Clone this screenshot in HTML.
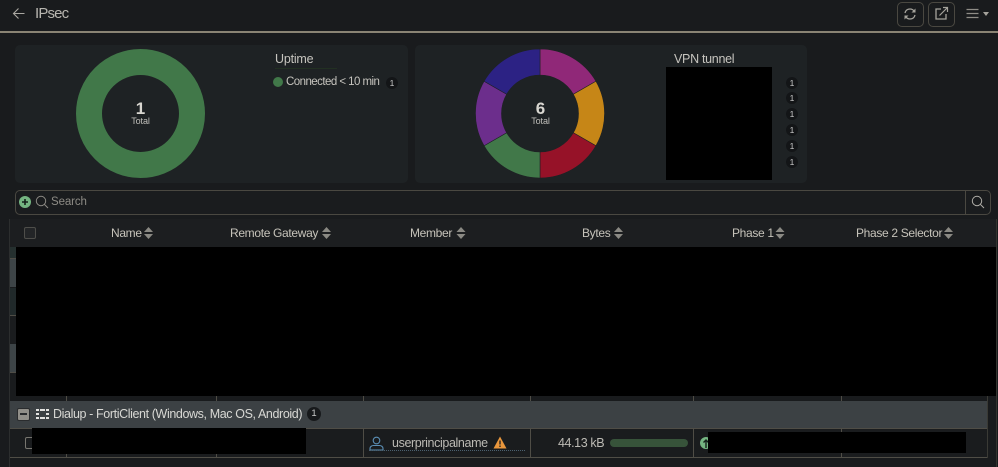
<!DOCTYPE html>
<html>
<head>
<meta charset="utf-8">
<style>
html,body{margin:0;padding:0;background:#191b1d;}
#p{position:relative;width:998px;height:467px;overflow:hidden;background:#191b1d;font-family:"Liberation Sans",sans-serif;color:#c9c7c1;}
#p div,#p span.a{position:absolute;}
.t{white-space:nowrap;line-height:1;}
.h{top:226px;font-size:12px;letter-spacing:-.33px;color:#c6c3ba;white-space:nowrap;line-height:14px;}
.b{width:12px;height:12px;border-radius:50%;background:#131517;color:#c8c8c8;font-size:8.5px;line-height:12px;text-align:center;}
.tick{width:1px;background:#4f4d46;}
</style>
</head>
<body>
<div id="p">
<!-- top bar -->
<svg style="position:absolute;left:12px;top:7px" width="14" height="13" viewBox="0 0 14 13"><path d="M12.5 6.500H1.500M6.500 1.500L1.500 6.500L6.500 11.500" fill="none" stroke="#a9a7a1" stroke-width="1.100"/></svg>
<div class="t" style="left:35px;top:6px;font-size:15px;letter-spacing:-.85px;color:#b8b6b0">IPsec</div>
<div style="left:0;top:31px;width:998px;height:2px;background:#8a8474"></div>

<div style="left:897px;top:2px;width:25px;height:23px;border:1px solid #4a4841;border-radius:5px"></div>
<svg style="position:absolute;left:903px;top:7px" width="14" height="14" viewBox="0 0 14 14"><path d="M2 6C2.500 3.500 4.500 2 7 2C9 2 10.500 3 11.500 4.500M12 8C11.500 10.500 9.500 12 7 12C5 12 3.500 11 2.500 9.500" fill="none" stroke="#a5a39c" stroke-width="1.300"/><path d="M12.500 1.500V5.500H8.500ZM1.500 12.500V8.500H5.500Z" fill="#a5a39c"/></svg>
<div style="left:928px;top:2px;width:25px;height:23px;border:1px solid #4a4841;border-radius:5px"></div>
<svg style="position:absolute;left:934px;top:6px" width="15" height="15" viewBox="0 0 15 15"><path d="M7 3H2V13H12V8" fill="none" stroke="#a5a39c" stroke-width="1.300"/><path d="M5.500 9.500L13 2M9 1.500H13.500V6" fill="none" stroke="#a5a39c" stroke-width="1.200"/></svg>
<svg style="position:absolute;left:966px;top:8px" width="24" height="12" viewBox="0 0 24 12"><path d="M0.500 1.500H12.500M0.500 5.500H12.500M0.500 9.500H12.500" stroke="#8f8d87" stroke-width="1.300"/><path d="M17 4H23L20 8Z" fill="#a5a39c"/></svg>

<!-- cards -->
<div style="left:15px;top:45px;width:393px;height:138px;border-radius:5px;background:#1e2224"></div>
<div style="left:415px;top:45px;width:392px;height:138px;border-radius:5px;background:#1e2224"></div>

<svg style="position:absolute;left:0;top:0" width="998" height="200" viewBox="0 0 998 200">
<circle cx="140.500" cy="113.500" r="51.500" fill="none" stroke="#417849" stroke-width="26"/>
<g stroke="#1e2224" stroke-width=".6">
<path d="M540 49A64.500 64.500 0 0 1 595.900 81.250L573.350 94.250A38.500 38.500 0 0 0 540 75Z" fill="#902878"/>
<path d="M595.900 81.250A64.500 64.500 0 0 1 595.900 145.750L573.350 132.750A38.500 38.500 0 0 0 573.350 94.250Z" fill="#c68617"/>
<path d="M595.900 145.750A64.500 64.500 0 0 1 540 178L540 152A38.500 38.500 0 0 0 573.350 132.750Z" fill="#961228"/>
<path d="M540 178A64.500 64.500 0 0 1 484.100 145.750L506.650 132.750A38.500 38.500 0 0 0 540 152Z" fill="#417849"/>
<path d="M484.100 145.750A64.500 64.500 0 0 1 484.100 81.250L506.650 94.250A38.500 38.500 0 0 0 506.650 132.750Z" fill="#6c2e8c"/>
<path d="M484.100 81.250A64.500 64.500 0 0 1 540 49L540 75A38.500 38.500 0 0 0 506.650 94.250Z" fill="#2c2284"/>
</g>
</svg>

<div class="t" style="left:100px;width:81px;text-align:center;top:100px;font-size:17px;font-weight:bold;color:#d8d6d0">1</div>
<div class="t" style="left:100px;width:81px;text-align:center;top:117px;font-size:9px;letter-spacing:-.1px;color:#c0bfba">Total</div>
<div class="t" style="left:500px;width:81px;text-align:center;top:100px;font-size:17px;font-weight:bold;color:#d8d6d0">6</div>
<div class="t" style="left:500px;width:81px;text-align:center;top:117px;font-size:9px;letter-spacing:-.1px;color:#c0bfba">Total</div>

<div class="t" style="left:275px;top:53px;font-size:12.500px;letter-spacing:-.2px;color:#c6c4be">Uptime</div>
<div style="left:275px;top:68px;width:62px;height:1px;background:#223022"></div>
<div style="left:273px;top:77px;width:10px;height:10px;border-radius:50%;background:#417849"></div>
<div class="t" style="left:286px;top:77px;font-size:11.500px;letter-spacing:-.55px;color:#c6c4be">Connected &lt; 10 min</div>
<div class="b" style="left:386px;top:77px">1</div>

<div class="t" style="left:674px;top:53px;font-size:12.500px;letter-spacing:-.3px;color:#c6c4be">VPN tunnel</div>
<div style="left:666px;top:67px;width:106px;height:113px;background:#000"></div>
<div class="b" style="left:786px;top:77px">1</div>
<div class="b" style="left:786px;top:92px">1</div>
<div class="b" style="left:786px;top:108px">1</div>
<div class="b" style="left:786px;top:124px">1</div>
<div class="b" style="left:786px;top:140px">1</div>
<div class="b" style="left:786px;top:156px">1</div>

<!-- search -->
<div style="left:15px;top:190px;width:974px;height:23px;border:1px solid #4a4841;border-radius:5px;background:#1a1c1e"></div>
<div style="left:965px;top:190px;width:1px;height:25px;background:#4a4841"></div>
<div style="left:19px;top:196px;width:12px;height:12px;border-radius:50%;background:#74b481"></div>
<svg style="position:absolute;left:19px;top:196px" width="12" height="12" viewBox="0 0 12 12"><path d="M6 3V9M3 6H9" stroke="#14201a" stroke-width="1.600"/></svg>
<svg style="position:absolute;left:35px;top:195px" width="14" height="14" viewBox="0 0 14 14"><circle cx="6" cy="6" r="4.700" fill="none" stroke="#8c8a84" stroke-width="1"/><path d="M9.500 9.500L13 13" stroke="#8c8a84" stroke-width="1"/></svg>
<div class="t" style="left:51px;top:197px;font-size:11.500px;letter-spacing:-.1px;color:#8d8b85">Search</div>
<svg style="position:absolute;left:971px;top:195px" width="14" height="14" viewBox="0 0 14 14"><circle cx="6" cy="6" r="4.700" fill="none" stroke="#b0aea8" stroke-width="1"/><path d="M9.500 9.500L13 13" stroke="#b0aea8" stroke-width="1"/></svg>

<!-- table -->
<div style="left:9px;top:219px;width:1px;height:248px;background:#2c2e2e"></div>
<div style="left:996px;top:219px;width:1px;height:248px;background:#33342f"></div>
<div style="left:10px;top:219px;width:986px;height:28px;background:#1c1e20"></div>
<div style="left:24px;top:227px;width:10px;height:10px;border:1px solid #4e4e4a;border-radius:2px;background:#232527"></div>

<div class="h" style="left:111px">Name</div>
<div class="h" style="left:230px">Remote Gateway</div>
<div class="h" style="left:410px">Member</div>
<div class="h" style="left:582px">Bytes</div>
<div class="h" style="left:732px">Phase 1</div>
<div class="h" style="left:856px">Phase 2 Selector</div>
<svg style="position:absolute;left:0;top:226px" width="998" height="14" viewBox="0 0 998 14">
<g fill="#8a8983">
<path d="M144 6L148.500 1L153 6ZM144 8L148.500 13L153 8Z"/>
<path d="M322 6L326.500 1L331 6ZM322 8L326.500 13L331 8Z"/>
<path d="M456.500 6L461 1L465.500 6ZM456.500 8L461 13L465.500 8Z"/>
<path d="M614 6L618.500 1L623 6ZM614 8L618.500 13L623 8Z"/>
<path d="M775.500 6L780 1L784.500 6ZM775.500 8L780 13L784.500 8Z"/>
<path d="M944 6L948.500 1L953 6ZM944 8L948.500 13L953 8Z"/>
</g>
</svg>

<!-- left stripes -->
<div style="left:10px;top:247px;width:6px;height:11px;background:#25302f"></div>
<div style="left:10px;top:258px;width:6px;height:1px;background:#4f4d46"></div>
<div style="left:10px;top:259px;width:6px;height:28px;background:#3d4447"></div>
<div style="left:10px;top:288px;width:6px;height:27px;background:#20292a"></div>
<div style="left:10px;top:315px;width:6px;height:1px;background:#4f4d46"></div>
<div style="left:10px;top:316px;width:6px;height:28px;background:#1a1c1e"></div>
<div style="left:10px;top:344px;width:6px;height:28px;background:#3d4447"></div>
<div style="left:10px;top:372px;width:6px;height:1px;background:#4f4d46"></div>

<!-- redaction -->
<div style="left:16px;top:247px;width:980px;height:149px;background:#000"></div>

<!-- below redaction -->
<div class="tick" style="left:66px;top:396px;height:5px"></div>
<div class="tick" style="left:216px;top:396px;height:5px"></div>
<div class="tick" style="left:363px;top:396px;height:5px"></div>
<div class="tick" style="left:530px;top:396px;height:5px"></div>
<div class="tick" style="left:693px;top:396px;height:5px"></div>
<div class="tick" style="left:841px;top:396px;height:5px"></div>

<!-- group row -->
<div style="left:10px;top:401px;width:977px;height:27px;background:#3c4144"></div>
<div style="left:10px;top:428px;width:977px;height:1px;background:#4f4d46"></div>
<div style="left:987px;top:396px;width:1px;height:62px;background:#3a3a35"></div>
<div style="left:17px;top:408px;width:11px;height:11px;background:#918f89;border:1px solid #2a2c2e;border-radius:2px"></div>
<div style="left:20px;top:413px;width:7px;height:2px;background:#2a2c2e"></div>
<svg style="position:absolute;left:36px;top:409px" width="13" height="10" viewBox="0 0 13 10"><g fill="#e2e2e0"><rect x="0" y="0" width="3" height="2"/><rect x="4" y="0" width="5" height="2"/><rect x="10" y="0" width="3" height="2"/><rect x="0" y="4" width="3" height="2"/><rect x="10" y="4" width="3" height="2"/><rect x="0" y="8" width="3" height="2"/><rect x="4" y="8" width="5" height="2"/><rect x="10" y="8" width="3" height="2"/></g></svg>
<div class="t" style="left:53px;top:408px;font-size:12.500px;letter-spacing:-.39px;color:#d8d8d4">Dialup - FortiClient (Windows, Mac OS, Android)</div>
<div style="left:307px;top:407px;width:14px;height:14px;border-radius:50%;background:#17191b;color:#c8c8c8;font-size:9.500px;line-height:14px;text-align:center">1</div>

<!-- data row -->
<div style="left:10px;top:429px;width:977px;height:28px;background:#1a1c1e"></div>
<div style="left:10px;top:457px;width:977px;height:1px;background:#4f4d46"></div>
<div style="left:25px;top:437px;width:10px;height:10px;border:1px solid #77756f;border-radius:2px"></div>
<div class="tick" style="left:66px;top:454px;height:3px"></div>
<div class="tick" style="left:216px;top:454px;height:3px"></div>
<div class="tick" style="left:363px;top:429px;height:28px"></div>
<div class="tick" style="left:530px;top:429px;height:28px"></div>
<div class="tick" style="left:693px;top:429px;height:28px"></div>
<div class="tick" style="left:841px;top:429px;height:28px"></div>

<svg style="position:absolute;left:369px;top:436px" width="15" height="15" viewBox="0 0 15 15"><circle cx="7.500" cy="4.500" r="3.300" fill="none" stroke="#5b8fb5" stroke-width="1.100"/><path d="M1 14V12.500C1 10.500 3 9.500 4.500 9.500H10.500C12 9.500 14 10.500 14 12.500V14Z" fill="none" stroke="#5b8fb5" stroke-width="1.100"/></svg>
<div class="t" style="left:392px;top:437px;font-size:12.500px;letter-spacing:-.38px;color:#bcbab4">userprincipalname</div>
<svg style="position:absolute;left:493px;top:436px" width="14" height="13" viewBox="0 0 14 13"><path d="M7 .5L13.500 12.500H.5Z" fill="#e8963c"/><path d="M7 4.500V8.500M7 9.500V11" stroke="#1a1c1e" stroke-width="1.300"/></svg>
<div style="left:369px;top:450px;width:156px;height:0;border-top:1px dotted #4c6170"></div>

<div class="t" style="left:558px;top:437px;font-size:12.500px;letter-spacing:-.4px;color:#bcbab4">44.13 kB</div>
<div style="left:610px;top:439px;width:78px;height:8px;border-radius:4px;background:#37533a"></div>

<div style="left:700px;top:437px;width:12px;height:12px;border-radius:50%;background:#74b481"></div>
<svg style="position:absolute;left:700px;top:437px" width="12" height="12" viewBox="0 0 12 12"><path d="M6 11V3M3.500 5.500L6 3L8.500 5.500" fill="none" stroke="#14201a" stroke-width="1.400"/></svg>

<div style="left:32px;top:428px;width:274px;height:26px;background:#000"></div>
<div style="left:708px;top:432px;width:258px;height:21px;background:#000"></div>
</div>
</body>
</html>
